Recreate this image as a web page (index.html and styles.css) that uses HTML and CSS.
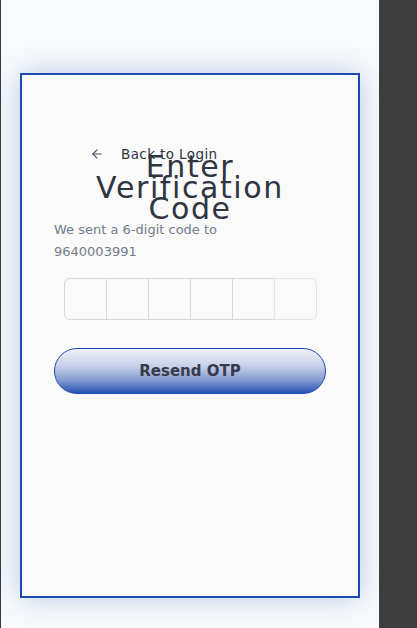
FILE: index.html
```html
<!DOCTYPE html>
<html>
<head>
<meta charset="utf-8">
<link rel="stylesheet" href="styles.css">
</head>
<body>
<div class="page">
  <main class="stage">
    <section class="card">
      <a class="back" href="#">
        <svg class="back-icon" viewBox="0 0 24 24" width="14" height="14" fill="none" stroke="currentColor" stroke-width="2" stroke-linecap="round" stroke-linejoin="round"><path d="M19 12H5"/><path d="M12 19l-7-7 7-7"/></svg>
        <span>Back to Login</span>
      </a>
      <h1 class="title">Enter Verification Code</h1>
      <p class="subtitle">We sent a 6-digit code to 9640003991</p>
      <div class="otp">
        <span class="otp-box"></span>
        <span class="otp-box"></span>
        <span class="otp-box"></span>
        <span class="otp-box"></span>
        <span class="otp-box"></span>
        <span class="otp-box otp-box--last"></span>
      </div>
      <button class="resend" type="button">Resend OTP</button>
    </section>
  </main>
  <aside class="side"></aside>
</div>
</body>
</html>
```
FILE: styles.css
```css
* { box-sizing: border-box; }
html, body { margin: 0; padding: 0; }
body {
  font-family: "DejaVu Sans", sans-serif;
  background: #f9fafb;
}
.page {
  display: flex;
  width: 417px;
  height: 628px;
}
.stage {
  width: 379px;
  height: 628px;
  border-left: 1px solid #3c3c3c;
  background: #f9fafb;
  padding: 73px 0 0 19px;
}
.side {
  flex: 1;
  background: #3d3d3d;
}
.card {
  width: 340px;
  height: 525px;
  border: 2px solid #1d4ab0;
  background: #fafafa;
  box-shadow: 0 0 28px rgba(30, 74, 176, 0.28);
  padding: 69px 32px 0 32px;
  display: flex;
  flex-direction: column;
}
.back {
  display: flex;
  align-items: center;
  gap: 17px;
  margin-left: 36px;
  height: 20px;
  color: #2f3441;
  text-decoration: none;
  font-size: 13.5px;
  letter-spacing: 0.4px;
  line-height: 20px;
  margin-bottom: -8px;
}
.back-icon { color: #4b5161; flex: none; }
.title {
  margin: 0;
  text-align: center;
  font-weight: 400;
  font-size: 30px;
  letter-spacing: 1.6px;
  line-height: 21px;
  color: #2f3441;
  padding: 0 40px;
}
.subtitle {
  margin: 0;
  font-size: 13px;
  line-height: 22px;
  color: #737a8a;
  padding-right: 60px;
}
.otp {
  display: flex;
  justify-content: center;
  margin-top: 15px;
}
.otp-box {
  width: 43px;
  height: 42px;
  border: 1px solid #d6d8de;
  margin-left: -1px;
}
.otp-box:first-child { border-radius: 6px 0 0 6px; margin-left: 0; }
.otp-box--last { border-radius: 0 6px 6px 0; border-color: #e4e6ea; }
.resend {
  margin-top: 28px;
  height: 46px;
  border-radius: 23px;
  border: 1.5px solid #1d4ab0;
  background: linear-gradient(180deg, #f0f2f9 0%, #c8d1e8 38%, #8099d0 72%, #2552b4 100%);
  font-family: inherit;
  font-weight: 700;
  font-size: 15px;
  color: #363c4a;
}
```
